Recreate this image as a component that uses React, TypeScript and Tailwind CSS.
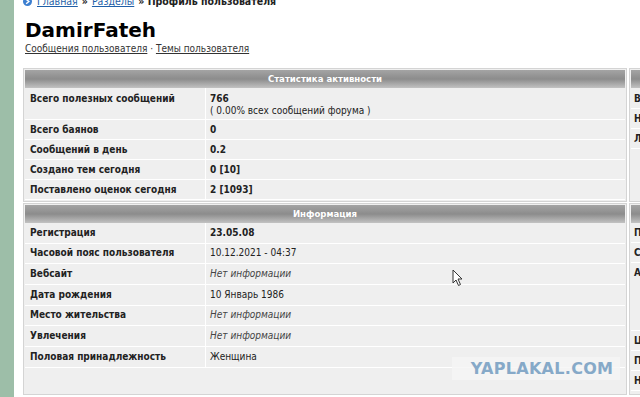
import React from 'react'

type Row = { label: string; value: React.ReactNode; h?: string }

const font = { fontFamily: '"DejaVu Sans Condensed", "DejaVu Sans", Verdana, sans-serif' }

const statRows: Row[] = [
  {
    label: 'Всего полезных сообщений',
    value: (
      <>
        <div className="font-bold">766</div>
        <div>( 0.00% всех сообщений форума )</div>
      </>
    ),
    h: 'h-[31px] pt-[5px]',
  },
  { label: 'Всего баянов', value: <span className="font-bold">0</span> },
  { label: 'Сообщений в день', value: <span className="font-bold">0.2</span> },
  { label: 'Создано тем сегодня', value: <span className="font-bold">0 [10]</span> },
  { label: 'Поставлено оценок сегодня', value: <span className="font-bold">2 [1093]</span> },
]

const noInfo = <span className="italic text-[#444]">Нет информации</span>

const infoRows: Row[] = [
  { label: 'Регистрация', value: <span className="font-bold">23.05.08</span> },
  { label: 'Часовой пояс пользователя', value: '10.12.2021 - 04:37' },
  { label: 'Вебсайт', value: noInfo },
  { label: 'Дата рождения', value: '10 Январь 1986' },
  { label: 'Место жительства', value: noInfo },
  { label: 'Увлечения', value: noInfo },
  { label: 'Половая принадлежность', value: 'Женщина' },
]

function SectionHeader({ title }: { title: string }) {
  return (
    <div className="h-[18px] bg-gradient-to-b from-[#a4a4a4] via-[#8c8c8c] to-[#c2c2c2] flex items-center justify-center text-white font-bold text-[9.5px]">
      {title}
    </div>
  )
}

function Rows({ rows, rowH }: { rows: Row[]; rowH: string }) {
  return (
    <div>
      {rows.map((r) => (
        <div key={r.label} className="flex border-b border-white">
          <div className={`w-[181px] shrink-0 border-r border-white pl-[5px] font-bold text-[#222] flex ${r.h ? 'items-start ' + r.h : 'items-center ' + rowH}`}>
            {r.label}
          </div>
          <div className={`flex-1 pl-[4px] text-[#222] ${r.h ? r.h : 'flex items-center ' + rowH}`}>
            {r.value}
          </div>
        </div>
      ))}
    </div>
  )
}

function Section({ title, children, className }: { title: string; children?: React.ReactNode; className?: string }) {
  return (
    <div className={`border border-[#d4d4d4] bg-[#efefef] p-px ${className ?? ''}`}>
      <SectionHeader title={title} />
      {children}
    </div>
  )
}

function SideRows({ letters }: { letters: { t: string; h: string }[] }) {
  return (
    <div>
      {letters.map((l, i) => (
        <div key={i} className={`flex items-center pl-[3px] font-bold text-[#222] border-b border-white ${l.h}`}>
          {l.t}
        </div>
      ))}
    </div>
  )
}

export default function App() {
  return (
    <div className="w-[640px] h-[397px] overflow-hidden bg-white flex text-[10px] leading-[12px]" style={font}>
      <div className="w-[14px] shrink-0 bg-[#9dbea8]" />
      <div className="relative pl-[9px] flex-1 min-w-0">
        {/* breadcrumb */}
        <div className="flex items-center gap-[4px] mt-[-5px] text-[10.5px] leading-[13px] h-[13px]">
          <svg width="9" height="9" viewBox="0 0 10 10" className="shrink-0">
            <circle cx="5" cy="5" r="5" fill="#3d7fd0" />
            <path d="M3.5 2.5 L6.5 5 L3.5 7.5" stroke="#fff" strokeWidth="1.6" fill="none" />
          </svg>
          <span className="text-[#1f5fa8] underline ml-[1px]">Главная</span>
          <span className="font-bold text-[#222]">»</span>
          <span className="text-[#1f5fa8] underline">Разделы</span>
          <span className="font-bold text-[#222]">» Профиль пользователя</span>
        </div>

        {/* title */}
        <h1
          className="mt-[12px] font-bold text-[20px] leading-[20px] text-black ml-[2px]"
          style={{ fontFamily: '"DejaVu Sans", Verdana, sans-serif' }}
        >
          DamirFateh
        </h1>
        <div className="mt-[3px] ml-[2px] text-[10px] leading-[12px] text-[#333]">
          <span className="underline">Сообщения пользователя</span> · <span className="underline">Темы пользователя</span>
        </div>

        {/* tables */}
        <div className="mt-[13px] grid grid-cols-[604px_220px] gap-x-[2px] gap-y-px">
          <Section title="Статистика активности">
            <Rows rows={statRows} rowH="h-[19px]" />
          </Section>
          <Section title="Статистика" className="h-full">
            <SideRows
              letters={[
                { t: 'Всего', h: 'h-[20px] mt-[1px]' },
                { t: 'Написано', h: 'h-[20px]' },
                { t: 'Личные', h: 'h-[20px]' },
              ]}
            />
          </Section>
          <Section title="Информация" className="h-[192px]">
            <Rows rows={infoRows} rowH="h-[19.67px]" />
          </Section>
          <Section title="Контакты" className="h-[192px]">
            <SideRows
              letters={[
                { t: 'Профиль', h: 'h-[20px]' },
                { t: 'Статус', h: 'h-[20px]' },
                { t: 'Аватар', h: 'h-[68px] items-start pt-[4px]' },
                { t: 'Цитата', h: 'h-[20px]' },
                { t: 'Подпись', h: 'h-[20px]' },
                { t: 'Награды', h: 'h-[20px]' },
              ]}
            />
          </Section>
        </div>

        {/* watermark */}
        <div className="absolute left-[438px] top-[357px] w-[168px] h-[23px] bg-[#f5f5f5]/80 flex items-center justify-center">
          <span
            className="text-[#86a9c8] font-black text-[16px] tracking-[0.3px] ml-[12px]"
            style={{ fontFamily: '"DejaVu Sans", sans-serif' }}
          >
            YAPLAKAL.COM
          </span>
        </div>

        {/* mouse cursor */}
        <svg className="absolute left-[438px] top-[269px]" width="12" height="18" viewBox="0 0 12 18">
          <path d="M1 1 L1 14 L4 11 L6.5 16.5 L8.5 15.5 L6 10 L10 10 Z" fill="#fff" stroke="#333" strokeWidth="1" strokeLinejoin="round" />
        </svg>
      </div>
    </div>
  )
}
